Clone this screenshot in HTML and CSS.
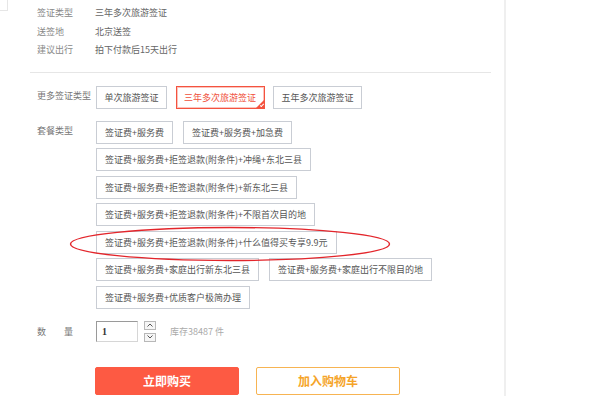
FILE: index.html
```html
<!DOCTYPE html>
<html lang="zh-CN">
<head>
  <meta charset="UTF-8">
  <title>签证详情</title>
  <link rel="stylesheet" href="styles.css">
</head>
<body>
  <div class="page">
    <span class="thumb-edge"></span>

    <div class="detail">
      <dl class="info">
        <div class="info-row"><dt>签证类型</dt><dd>三年多次旅游签证</dd></div>
        <div class="info-row"><dt>送签地</dt><dd>北京送签</dd></div>
        <div class="info-row"><dt>建议出行</dt><dd>拍下付款后15天出行</dd></div>
      </dl>

      <div class="options">
        <div class="opt-row">
          <div class="opt-label">更多签证类型</div>
          <div class="opt-list tight">
            <span class="opt">单次旅游签证</span>
            <span class="opt selected">三年多次旅游签证</span>
            <span class="opt">五年多次旅游签证</span>
          </div>
        </div>

        <div class="opt-row">
          <div class="opt-label">套餐类型</div>
          <div class="opt-list">
            <span class="opt">签证费+服务费</span>
            <span class="opt">签证费+服务费+加急费</span>
            <span class="opt">签证费+服务费+拒签退款(附条件)+冲绳+东北三县</span>
            <span class="opt">签证费+服务费+拒签退款(附条件)+新东北三县</span>
            <span class="opt">签证费+服务费+拒签退款(附条件)+不限首次目的地</span>
            <span class="opt">签证费+服务费+拒签退款(附条件)+什么值得买专享9.9元</span>
            <span class="opt">签证费+服务费+家庭出行新东北三县</span>
            <span class="opt">签证费+服务费+家庭出行不限目的地</span>
            <span class="opt">签证费+服务费+优质客户极简办理</span>
          </div>
        </div>

        <div class="qty-row">
          <div class="opt-label">数　　量</div>
          <input class="qty-input" type="text" value="1">
          <div class="spin">
            <span class="spin-btn">
              <svg width="6" height="4" viewBox="0 0 6 4"><path d="M0.5 3.5 L3 1 L5.5 3.5" fill="none" stroke="#555" stroke-width="1"/></svg>
            </span>
            <span class="spin-btn">
              <svg width="6" height="4" viewBox="0 0 6 4"><path d="M0.5 0.5 L3 3 L5.5 0.5" fill="none" stroke="#555" stroke-width="1"/></svg>
            </span>
          </div>
          <span class="stock">库存38487 件</span>
        </div>

        <div class="actions">
          <button class="btn buy">立即购买</button>
          <button class="btn cart">加入购物车</button>
        </div>
      </div>
    </div>

    <!-- hand-drawn annotation circling the 9.9 package -->
    <svg class="mark" width="322" height="38" viewBox="0 0 322 38">
      <ellipse cx="161" cy="19" rx="159.5" ry="16.5" fill="none" stroke="#e3252b" stroke-width="1.4"/>
    </svg>
  </div>
</body>
</html>
```
FILE: styles.css
```css
body {
  margin: 0;
  font-family: "Noto Sans CJK SC", "Liberation Sans", sans-serif;
  font-size: 9px;
  color: #666;
  background: #fff;
}
.page {
  position: relative;
  display: flex;
  height: 396px;
  overflow: hidden;
}
.thumb-edge {
  position: absolute;
  left: -1px;
  top: -1px;
  width: 7px;
  height: 10px;
  border: 1px solid #e6e6e6;
}
.detail {
  width: 506px;
  box-sizing: border-box;
  border-right: 2px solid #efefef;
  padding: 0 13px 0 30px;
}
.info {
  margin: 0;
  padding: 4px 0 12px 7px;
  line-height: 18.5px;
}
.info-row {
  display: flex;
}
.info dt {
  width: 58px;
  color: #888;
}
.info dd {
  margin: 0;
  color: #666;
}
.options {
  border-top: 1px solid #e6e6e6;
  padding: 13px 0 0 7px;
}
.opt-row {
  display: flex;
  margin-bottom: 12px;
}
.opt-label {
  width: 59px;
  flex-shrink: 0;
  line-height: 20px;
  color: #777;
}
.opt-list {
  flex: 1;
  display: flex;
  flex-wrap: wrap;
  align-items: flex-start;
  gap: 4.5px 10px;
}
.opt-list.tight {
  column-gap: 8.5px;
}
.opt-list.tight .opt {
  padding: 0 7.5px;
}
.opt {
  position: relative;
  height: 23px;
  box-sizing: border-box;
  border: 1px solid #c9cdd4;
  padding: 0 8px;
  line-height: 21px;
  color: #555;
  white-space: nowrap;
  cursor: pointer;
}
.opt.selected {
  border-color: #f4533f;
  box-shadow: inset 0 0 0 1px rgba(244, 83, 63, 0.35);
  color: #f0503c;
}
.opt.selected::after {
  content: "";
  position: absolute;
  right: 0;
  bottom: 0;
  border: 4px solid transparent;
  border-right-color: #f4533f;
  border-bottom-color: #f4533f;
}
.opt.selected::before {
  content: "";
  position: absolute;
  right: 1px;
  bottom: 1px;
  width: 1px;
  height: 3px;
  border-right: 1px solid #fff;
  border-bottom: 1px solid #fff;
  transform: rotate(45deg);
  z-index: 1;
}
.qty-row {
  display: flex;
  align-items: center;
  margin-top: 12px;
}
.qty-row .opt-label {
  line-height: 21px;
}
.qty-input {
  width: 42px;
  height: 21px;
  box-sizing: border-box;
  margin: 0;
  border: 1px solid #d6d6d6;
  border-top-color: #9a9a9a;
  border-left-color: #9a9a9a;
  padding: 0 0 0 5px;
  font-family: "Liberation Serif", serif;
  font-size: 10px;
  font-weight: bold;
  color: #333;
}
.spin {
  display: flex;
  flex-direction: column;
  justify-content: space-between;
  height: 21px;
  margin-left: 6px;
}
.spin-btn {
  display: flex;
  align-items: center;
  justify-content: center;
  width: 12px;
  height: 9px;
  box-sizing: border-box;
  border: 1px solid #b8b8b8;
  background: #f6f6f6;
}
.stock {
  margin-left: 14px;
  color: #aaa;
}
.actions {
  display: flex;
  gap: 17px;
  margin-top: 25px;
  padding-left: 58px;
}
.btn {
  width: 144px;
  height: 28px;
  box-sizing: border-box;
  border-radius: 2px;
  font-family: "Noto Sans CJK SC", sans-serif;
  font-size: 12px;
  font-weight: bold;
  cursor: pointer;
}
.btn.buy {
  background: #fd5a43;
  border: 1px solid #fd5a43;
  color: #fff;
}
.btn.cart {
  background: #fff;
  border: 1px solid #f7b452;
  color: #f5a428;
}
.mark {
  position: absolute;
  left: 69px;
  top: 225px;
}
```
